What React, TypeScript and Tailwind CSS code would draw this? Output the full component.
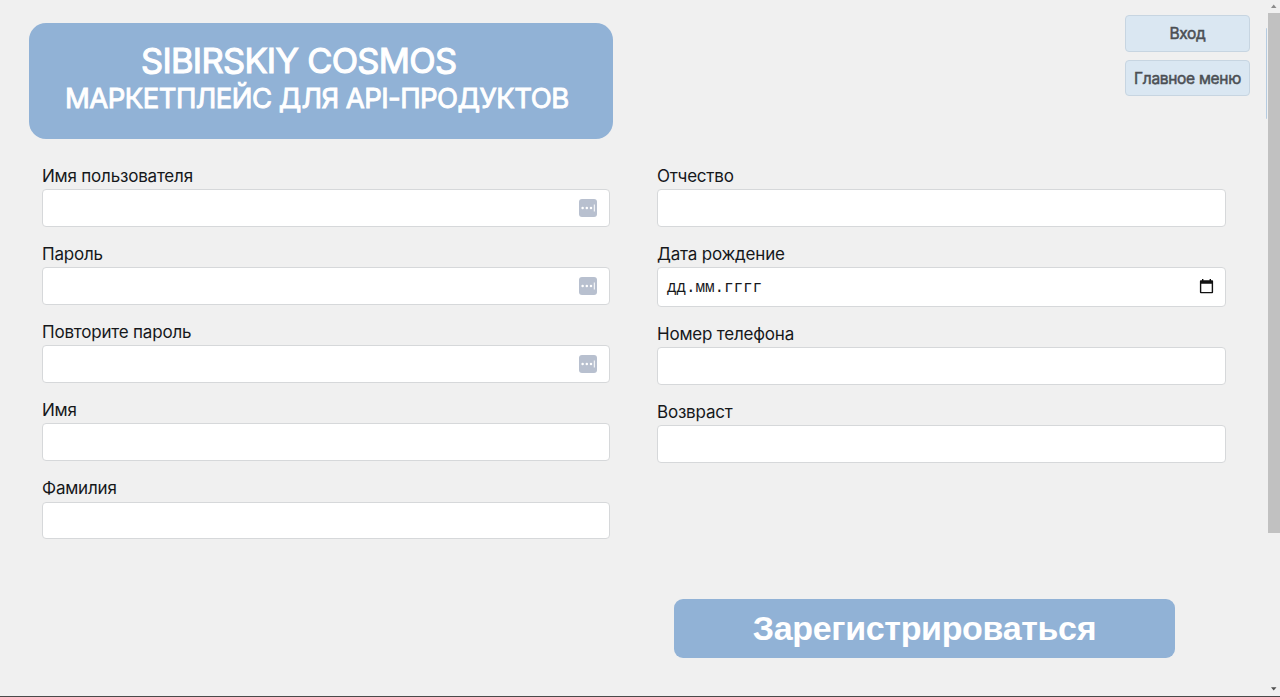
type FieldProps = { label: string; kind?: "text" | "key" | "date" };

function KeyIcon() {
  return (
    <svg className="mr-[12px] h-[18px] w-[18px]" viewBox="0 0 18 18">
      <rect width="18" height="18" rx="3" fill="#b8c0cf" />
      <circle cx="3.6" cy="9" r="1.25" fill="#fff" />
      <circle cx="7.8" cy="9" r="1.25" fill="#fff" />
      <circle cx="12" cy="9" r="1.25" fill="#fff" />
      <rect x="14.8" y="5.5" width="1" height="7" fill="#fff" />
    </svg>
  );
}

function CalendarIcon() {
  return (
    <svg className="mr-[11px] mb-[1px] h-[15px] w-[15px]" viewBox="0 0 15 15">
      <path
        fillRule="evenodd"
        fill="#111"
        d="M3 0h1.4v1.3h6.2V0H12v1.3h1.1q1 0 1 1v11q0 1-1 1H1.9q-1 0-1-1v-11q0-1 1-1H3zM2.3 4.7v8.2h10.4V4.7z"
      />
    </svg>
  );
}

function Field({ label, kind = "text" }: FieldProps) {
  return (
    <label className="mb-[16.2px] block">
      <span className="block h-[24.4px] text-[17px] leading-[22px] tracking-[-0.2px] text-[#16181b]">{label}</span>
      <span
        className={`flex items-center justify-end rounded-[4px] border border-[#d6d8da] bg-white ${
          kind === "date" ? "h-[39.3px]" : "h-[37.5px]"
        }`}
      >
        {kind === "key" && <KeyIcon />}
        {kind === "date" && (
          <>
            <span className="mt-[3px] ml-[9px] flex-1 font-['Liberation_Mono',monospace] text-[16px] leading-5 tracking-[-0.1px] text-[#16181b]">
              дд.мм.гггг
            </span>
            <CalendarIcon />
          </>
        )}
      </span>
    </label>
  );
}

function NavButton({ children }: { children: string }) {
  return (
    <button className="h-[36.5px] w-[125px] rounded-[4px] border border-[#c7d5e1] bg-[#dae7f2] pt-[1.6px] text-[15.5px] tracking-[-0.3px] whitespace-nowrap text-[#4b4f54] [-webkit-text-stroke:0.5px_#4b4f54]">
      {children}
    </button>
  );
}

export default function App() {
  return (
    <div className="flex h-[697px] w-[1280px] flex-col overflow-hidden bg-[#f0f0f0] font-['Inter',sans-serif]">
      <div className="flex min-h-0 flex-1">
        <main className="flex w-[1266px] flex-col">
          <header className="flex h-[164px] shrink-0 justify-between pt-[15px] pr-[16px] pl-[29px]">
            <div className="mt-[8px] h-[116px] w-[584px] rounded-[17px] bg-[#91b2d6] text-white">
              <h1 className="mt-[18px] ml-[112px] text-[34.5px] leading-[40px] tracking-[-0.7px] whitespace-nowrap [-webkit-text-stroke:1.1px_white]">
                SIBIRSKIY COSMOS
              </h1>
              <p className="mt-px ml-[36px] text-[27.5px] leading-[32px] tracking-[-0.54px] whitespace-nowrap [-webkit-text-stroke:0.9px_white]">
                МАРКЕТПЛЕЙС ДЛЯ API-ПРОДУКТОВ
              </p>
            </div>
            <nav className="flex flex-col gap-[8px]">
              <NavButton>Вход</NavButton>
              <NavButton>Главное меню</NavButton>
            </nav>
          </header>
          <form className="flex flex-1 flex-col">
            <div className="flex h-[392px] gap-[47px] pt-[0.8px] pl-[42px]">
              <div className="w-[568px]">
                <Field label="Имя пользователя" kind="key" />
                <Field label="Пароль" kind="key" />
                <Field label="Повторите пароль" kind="key" />
                <Field label="Имя" />
                <Field label="Фамилия" />
              </div>
              <div className="w-[568.5px]">
                <Field label="Отчество" />
                <Field label="Дата рождение" kind="date" />
                <Field label="Номер телефона" />
                <Field label="Возвраст" />
              </div>
            </div>
            <button
              type="button"
              className="mt-[43px] ml-[674px] h-[59px] w-[501px] shrink-0 rounded-[9px] bg-[#91b2d6] font-['Liberation_Sans',sans-serif] text-[34px] font-bold tracking-[-0.33px] text-white"
            >
              Зарегистрироваться
            </button>
          </form>
        </main>
        <div className="mt-[28px] h-[91px] w-px rounded-l bg-[#b5cbe0]" />
        <div className="flex w-[13px] flex-col items-center">
          <svg className="h-[13px] w-[13px] shrink-0" viewBox="0 0 13 13">
            <path d="M4 8 6.7 4.6 9.5 8z" fill="#8b8b8b" />
          </svg>
          <div className="ml-px h-[520px] w-[12px] shrink-0 bg-[#c1c1c1]" />
          <svg className="mt-auto h-[13px] w-[13px] shrink-0" viewBox="0 0 13 13">
            <path d="M4 4.2h5.5L6.7 7.4z" fill="#505050" />
          </svg>
        </div>
      </div>
      <div className="h-px shrink-0 bg-[#4a4a4a]" />
    </div>
  );
}
